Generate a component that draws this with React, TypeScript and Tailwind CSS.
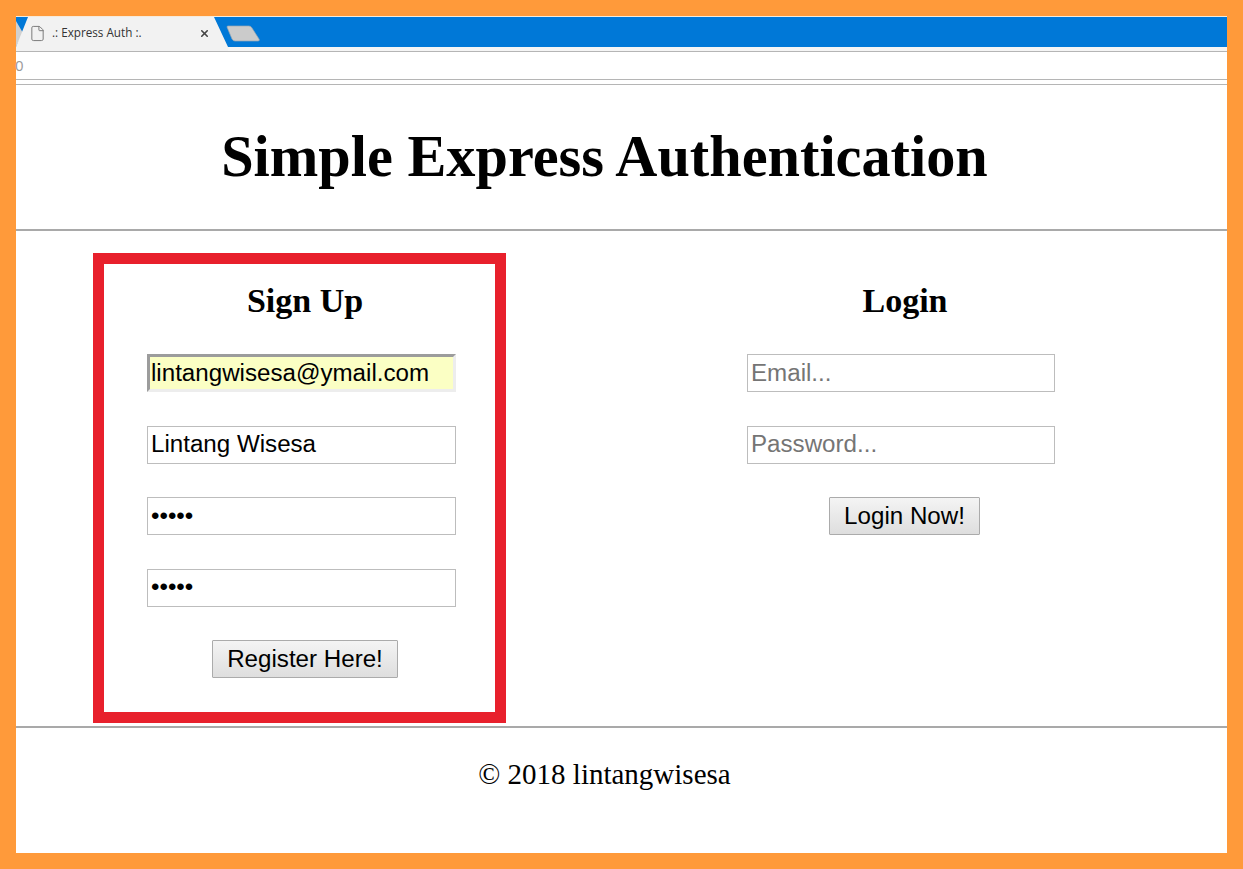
import { File, X } from "lucide-react";

const inputClass =
  "block w-[309px] h-[38px] px-[3px] pb-[1px] border border-[#bdbdbd] text-[24.15px] text-black placeholder:text-[#757575] outline-none font-['Liberation_Sans',sans-serif]";

const buttonClass =
  "h-[38px] border border-[#ababab] rounded-[1px] bg-gradient-to-b from-[#f4f4f4] to-[#dedede] text-[24.15px] text-black font-['Liberation_Sans',sans-serif]";

function BrowserBar() {
  return (
    <div className="shrink-0">
      {/* Tab strip */}
      <div className="relative h-[36px] bg-[#f5f5f5] border-t border-[#f7ead9] border-b-[#b5b5b5] border-b overflow-hidden">
        <div className="h-[30px] bg-[#0078d7]"></div>
        <svg className="absolute left-0 top-0" width="260" height="35" viewBox="0 0 260 35">
          <path d="M0 0 L12 0 L7 16 L0 4 Z" fill="#0078d7" />
          <path d="M0 4 L7 16 L0 30 Z" fill="#d0d0d0" />
          <path d="M0 34 L0 30 L12 0 L198 0 L212 30 L212 34 Z" fill="#f2f2f2" />
          <path d="M212 9 L233 9 Q235 9 236 11 L243 22 Q244 24 242 24 L219 24 Q217 24 216 22 L211 10 Q211 9 212 9 Z" fill="#cbcbcb" stroke="#9aa7b2" strokeWidth="0.7" />
        </svg>
        <div className="absolute left-[16px] top-[7px] flex items-center h-[18px] w-[179px]">
          <File className="w-[17px] h-[19px] text-[#7a7a7a] shrink-0 ml-[-3px]" strokeWidth={1.4} />
          <span className="ml-[6px] text-[11.7px] text-[#333] font-['Open_Sans',sans-serif]">.: Express Auth :.</span>
          <X className="ml-auto mr-[1px] w-[11px] h-[11px] text-[#444]" strokeWidth={3.5} />
        </div>
      </div>
      {/* Address bar */}
      <div className="h-[28px] bg-white border-b border-[#b5b5b5] flex items-center">
        <span className="text-[15px] text-[#999] font-['Open_Sans',sans-serif] ml-[-1px]">0</span>
      </div>
      <div className="h-[5px] bg-white border-b border-[#b5b5b5]"></div>
    </div>
  );
}

export default function App() {
  return (
    <div className="w-[1243px] h-[869px] bg-[#ff9a3a] p-4 overflow-hidden">
      <div className="h-full bg-white flex flex-col font-['Liberation_Serif',serif] text-black">
        <BrowserBar />

        {/* Title */}
        <h1 className="h-[146px] shrink-0 flex items-center justify-center text-center text-[58.3px] font-bold leading-none border-b-2 border-[#a9a9a9] pr-[34px]">
          Simple Express Authentication
        </h1>

        {/* Forms */}
        <div className="flex h-[497px] shrink-0 border-b-2 border-[#a9a9a9] pt-[22px] pl-[77px]">
          <div className="w-[413px] h-[470px] border-[11px] border-[#e8202c] pl-[43px] pt-[11px]">
            <div className="w-[316px] flex flex-col">
              <h2 className="text-[34px] font-bold leading-[52px] text-center">Sign Up</h2>
              <input
                readOnly
                value="lintangwisesa@ymail.com"
                className={`${inputClass} mt-[27px] border-[3px] border-t-[#9c9c9c] border-l-[#9c9c9c] border-r-[#ededed] border-b-[#ededed] bg-[#fbffc4] pl-[1px]`}
              />
              <input readOnly value="Lintang Wisesa" className={`${inputClass} mt-[33.5px] bg-white`} />
              <input readOnly type="password" value="abcde" className={`${inputClass} mt-[33.5px] bg-white`} />
              <input readOnly type="password" value="abcde" className={`${inputClass} mt-[33.5px] bg-white`} />
              <button className={`${buttonClass} w-[186px] self-center mt-[33px]`}>Register Here!</button>
            </div>
          </div>

          <div className="ml-[241px] w-[316px] pt-[22px] flex flex-col">
            <h2 className="text-[34px] font-bold leading-[52px] text-center">Login</h2>
            <input placeholder="Email..." className={`${inputClass} mt-[27px] !w-[308px] bg-white`} />
            <input placeholder="Password..." className={`${inputClass} mt-[33.5px] !w-[308px] bg-white`} />
            <button className={`${buttonClass} w-[151px] self-start ml-[82px] mt-[33.5px]`}>Login Now!</button>
          </div>
        </div>

        {/* Footer */}
        <footer className="text-center text-[29px] leading-[34px] pt-[29px] pr-[34px]">© 2018 lintangwisesa</footer>
      </div>
    </div>
  );
}
